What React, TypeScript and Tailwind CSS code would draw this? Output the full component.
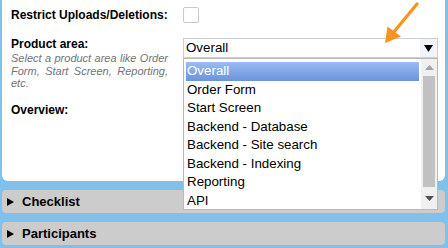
import React from "react";

const items = [
  "Overall",
  "Order Form",
  "Start Screen",
  "Backend - Database",
  "Backend - Site search",
  "Backend - Indexing",
  "Reporting",
  "API",
];

function Tri() {
  return (
    <svg width="7" height="8" viewBox="0 0 7 8" className="shrink-0">
      <polygon points="0,0 7,4 0,8" fill="#000" />
    </svg>
  );
}

export default function App() {
  return (
    <div className="relative w-[448px] h-[248px] overflow-hidden bg-[#7fc1ec] pl-[2px] pr-[3px] font-['Liberation_Sans',Arial,sans-serif] text-black">
      <div className="relative h-[181px] bg-white rounded-b-[6px] pl-[9px] pr-[7px] pt-[7px]">
        <div className="flex items-center h-[16px]">
          <div className="w-[172px] text-[12px] font-bold leading-[15px]">Restrict Uploads/Deletions:</div>
          <div className="w-[16px] h-[16px] border border-[#c8c8c8] rounded-[2px] bg-white" />
        </div>
        <div className="flex mt-[14px]">
          <div className="w-[172px]">
            <div className="text-[12px] font-bold leading-[15px]">Product area:</div>
            <div className="w-[157px] text-[11px] italic leading-[12.5px] text-[#737373] text-justify">
              Select a product area like Order Form, Start Screen, Reporting, etc.
            </div>
          </div>
          <div className="mt-[1px] w-[255px] h-[20px] border border-[#cfcfcf] bg-white flex items-stretch">
            <div className="flex-1 text-[13.33px] leading-[18px] pl-[2px]">Overall</div>
            <div className="w-[17px] bg-[#f1f4fa] flex items-center justify-center">
              <svg width="9" height="7" viewBox="0 0 9 7">
                <polygon points="0,0 9,0 4.5,7" fill="#000" />
              </svg>
            </div>
          </div>
        </div>
        <div className="mt-[13px] text-[12px] font-bold leading-[15px]">Overview:</div>

        <div className="absolute z-10 left-[181px] top-[58px] w-[255px] h-[152px] bg-white border border-[#b9b9b9] flex overflow-hidden">
          <div className="flex-1 pt-[3px] pl-[2px] pr-[2px]">
            {items.map((it, i) => (
              <div
                key={it}
                className={
                  i === 0
                    ? "h-[18.5px] leading-[18.5px] text-[13.33px] pl-[1px] text-white bg-gradient-to-b from-[#9bbcf3] to-[#6c93da]"
                    : "h-[18.5px] leading-[18.5px] text-[13.33px] pl-[1px]"
                }
              >
                {it}
              </div>
            ))}
          </div>
          <div className="w-[16px] bg-[#f0f0f0] flex flex-col items-center">
            <div className="h-[17px] flex items-center justify-center">
              <svg width="9" height="5" viewBox="0 0 9 5">
                <polygon points="4.5,0 9,5 0,5" fill="#a3a3a3" />
              </svg>
            </div>
            <div className="w-[12px] h-[111px] bg-[#c1c1c1]" />
            <div className="flex-1 flex items-center justify-center">
              <svg width="9" height="5" viewBox="0 0 9 5">
                <polygon points="0,0 9,0 4.5,5" fill="#505050" />
              </svg>
            </div>
          </div>
        </div>
      </div>

      <div className="mt-[9px] h-[23px] rounded-[4px] bg-[#cccccc] flex items-center pl-[5px] gap-[8px]">
        <Tri />
        <span className="text-[13px] font-bold">Checklist</span>
      </div>
      <div className="mt-[9px] h-[23px] rounded-[4px] bg-[#cccccc] flex items-center pl-[5px] gap-[8px]">
        <Tri />
        <span className="text-[13px] font-bold">Participants</span>
      </div>

      <svg className="absolute left-0 top-0 z-20" width="448" height="60" viewBox="0 0 448 60">
        <line x1="417" y1="4" x2="393" y2="33" stroke="#f7931e" strokeWidth="3.2" strokeLinecap="round" />
        <polygon points="385,43 387.5,26.5 401,36.5" fill="#f7931e" />
      </svg>
    </div>
  );
}
